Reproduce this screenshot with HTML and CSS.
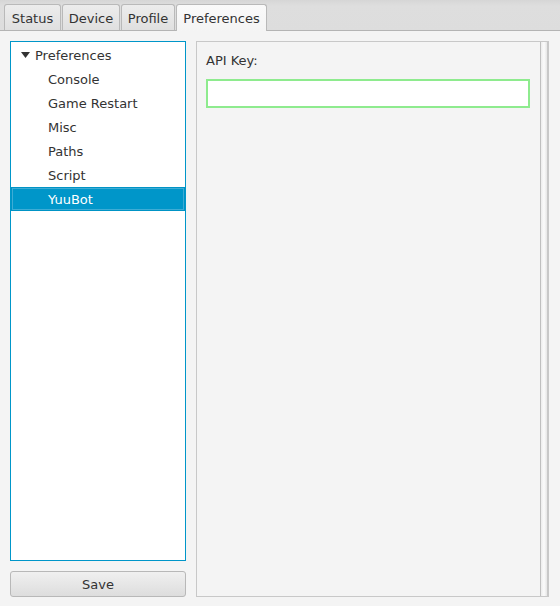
FILE: index.html
```html
<!DOCTYPE html>
<html>
<head>
<meta charset="utf-8">
<link rel="stylesheet" href="styles.css">
</head>
<body>
<div class="app">
  <div class="tabbar">
    <div class="tab tab-status">Status</div>
    <div class="tab tab-device">Device</div>
    <div class="tab tab-profile">Profile</div>
    <div class="tab tab-prefs tab-active">Preferences</div>
  </div>
  <div class="content">
    <div class="left">
      <div class="tree">
        <div class="row root"><svg class="arrow" width="9" height="6" viewBox="0 0 9 6"><path d="M0 0 H9 L4.5 6 Z" fill="#333"/></svg><span>Preferences</span></div>
        <div class="row child">Console</div>
        <div class="row child">Game Restart</div>
        <div class="row child">Misc</div>
        <div class="row child">Paths</div>
        <div class="row child">Script</div>
        <div class="row child selected">YuuBot</div>
      </div>
      <button class="btn">Save</button>
    </div>
    <div class="panel">
      <div class="panel-body">
        <div class="label">API Key:</div>
        <div class="field"></div>
      </div>
      <div class="vstrip"></div>
    </div>
  </div>
</div>
</body>
</html>
```

FILE: styles.css
```css
html, body {
  margin: 0;
  padding: 0;
  width: 560px;
  height: 606px;
  overflow: hidden;
  background: #f4f4f4;
  font-family: "DejaVu Sans", sans-serif;
  font-size: 13px;
  color: #333;
}
.app {
  display: flex;
  flex-direction: column;
  height: 606px;
}
.tabbar {
  height: 31px;
  box-sizing: border-box;
  background: linear-gradient(#d6d6d6, #dedede 20%, #dddddd);
  border-bottom: 1px solid #b4b4b4;
  display: flex;
  align-items: flex-end;
  padding-left: 4px;
  gap: 1px;
}
.tab {
  height: 26px;
  box-sizing: border-box;
  padding: 2px 0 0;
  border: 1px solid #b9b9b9;
  border-bottom: none;
  border-radius: 3px 3px 0 0;
  background: linear-gradient(#ececec, #e0e0e0);
  display: flex;
  align-items: center;
  justify-content: center;
  white-space: nowrap;
  color: #333;
}
.tab-status { width: 57px; }
.tab-device { width: 58px; }
.tab-profile { width: 54px; }
.tab-prefs { width: 91px; }
.tab-active {
  background: linear-gradient(#fafafa, #f4f4f4);
  height: 27px;
  margin-bottom: -1px;
  padding-bottom: 1px;
}
.content {
  flex: 1;
  display: flex;
  padding: 10px 11px 9px 10px;
  gap: 10px;
}
.left {
  width: 176px;
  display: flex;
  flex-direction: column;
  gap: 10px;
}
.tree {
  flex: 1;
  padding-top: 1px;
  background: #fff;
  border: 1px solid #0096c9;
  box-shadow: inset 0 0 0 1px #fff;
}
.row {
  height: 24px;
  display: flex;
  align-items: center;
  white-space: nowrap;
}
.root {
  padding-left: 10px;
}
.arrow {
  margin-right: 5px;
  margin-top: -1px;
}
.child {
  padding-left: 37px;
}
.selected {
  background: #0096c9;
  color: #fff;
  box-shadow: inset 0 0 0 1px #0093c5, inset 0 0 0 2px #3eacd5;
}
.btn {
  height: 26px;
  margin: 0;
  padding: 0;
  border: 1px solid #b8b8b8;
  border-radius: 3px;
  background: linear-gradient(#f0f0f0, #dddddd);
  font-family: "DejaVu Sans", sans-serif;
  font-size: 13px;
  color: #333;
}
.panel {
  flex: 1;
  display: flex;
  border: 1px solid #c8c8c8;
  border-right: 2px solid #c8c8c8;
}
.panel-body {
  flex: 1;
  padding: 9px 10px 0 9px;
}
.label {
  height: 20px;
  line-height: 20px;
}
.field {
  margin-top: 8px;
  height: 29px;
  box-sizing: border-box;
  background: #fff;
  border: 2px solid #8eeb8e;
}
.vstrip {
  width: 6px;
  border-left: 1px solid #bfbfbf;
  background: linear-gradient(to right, #ececec, #fbfbfb 50%, #e6e6e6);
}
```
